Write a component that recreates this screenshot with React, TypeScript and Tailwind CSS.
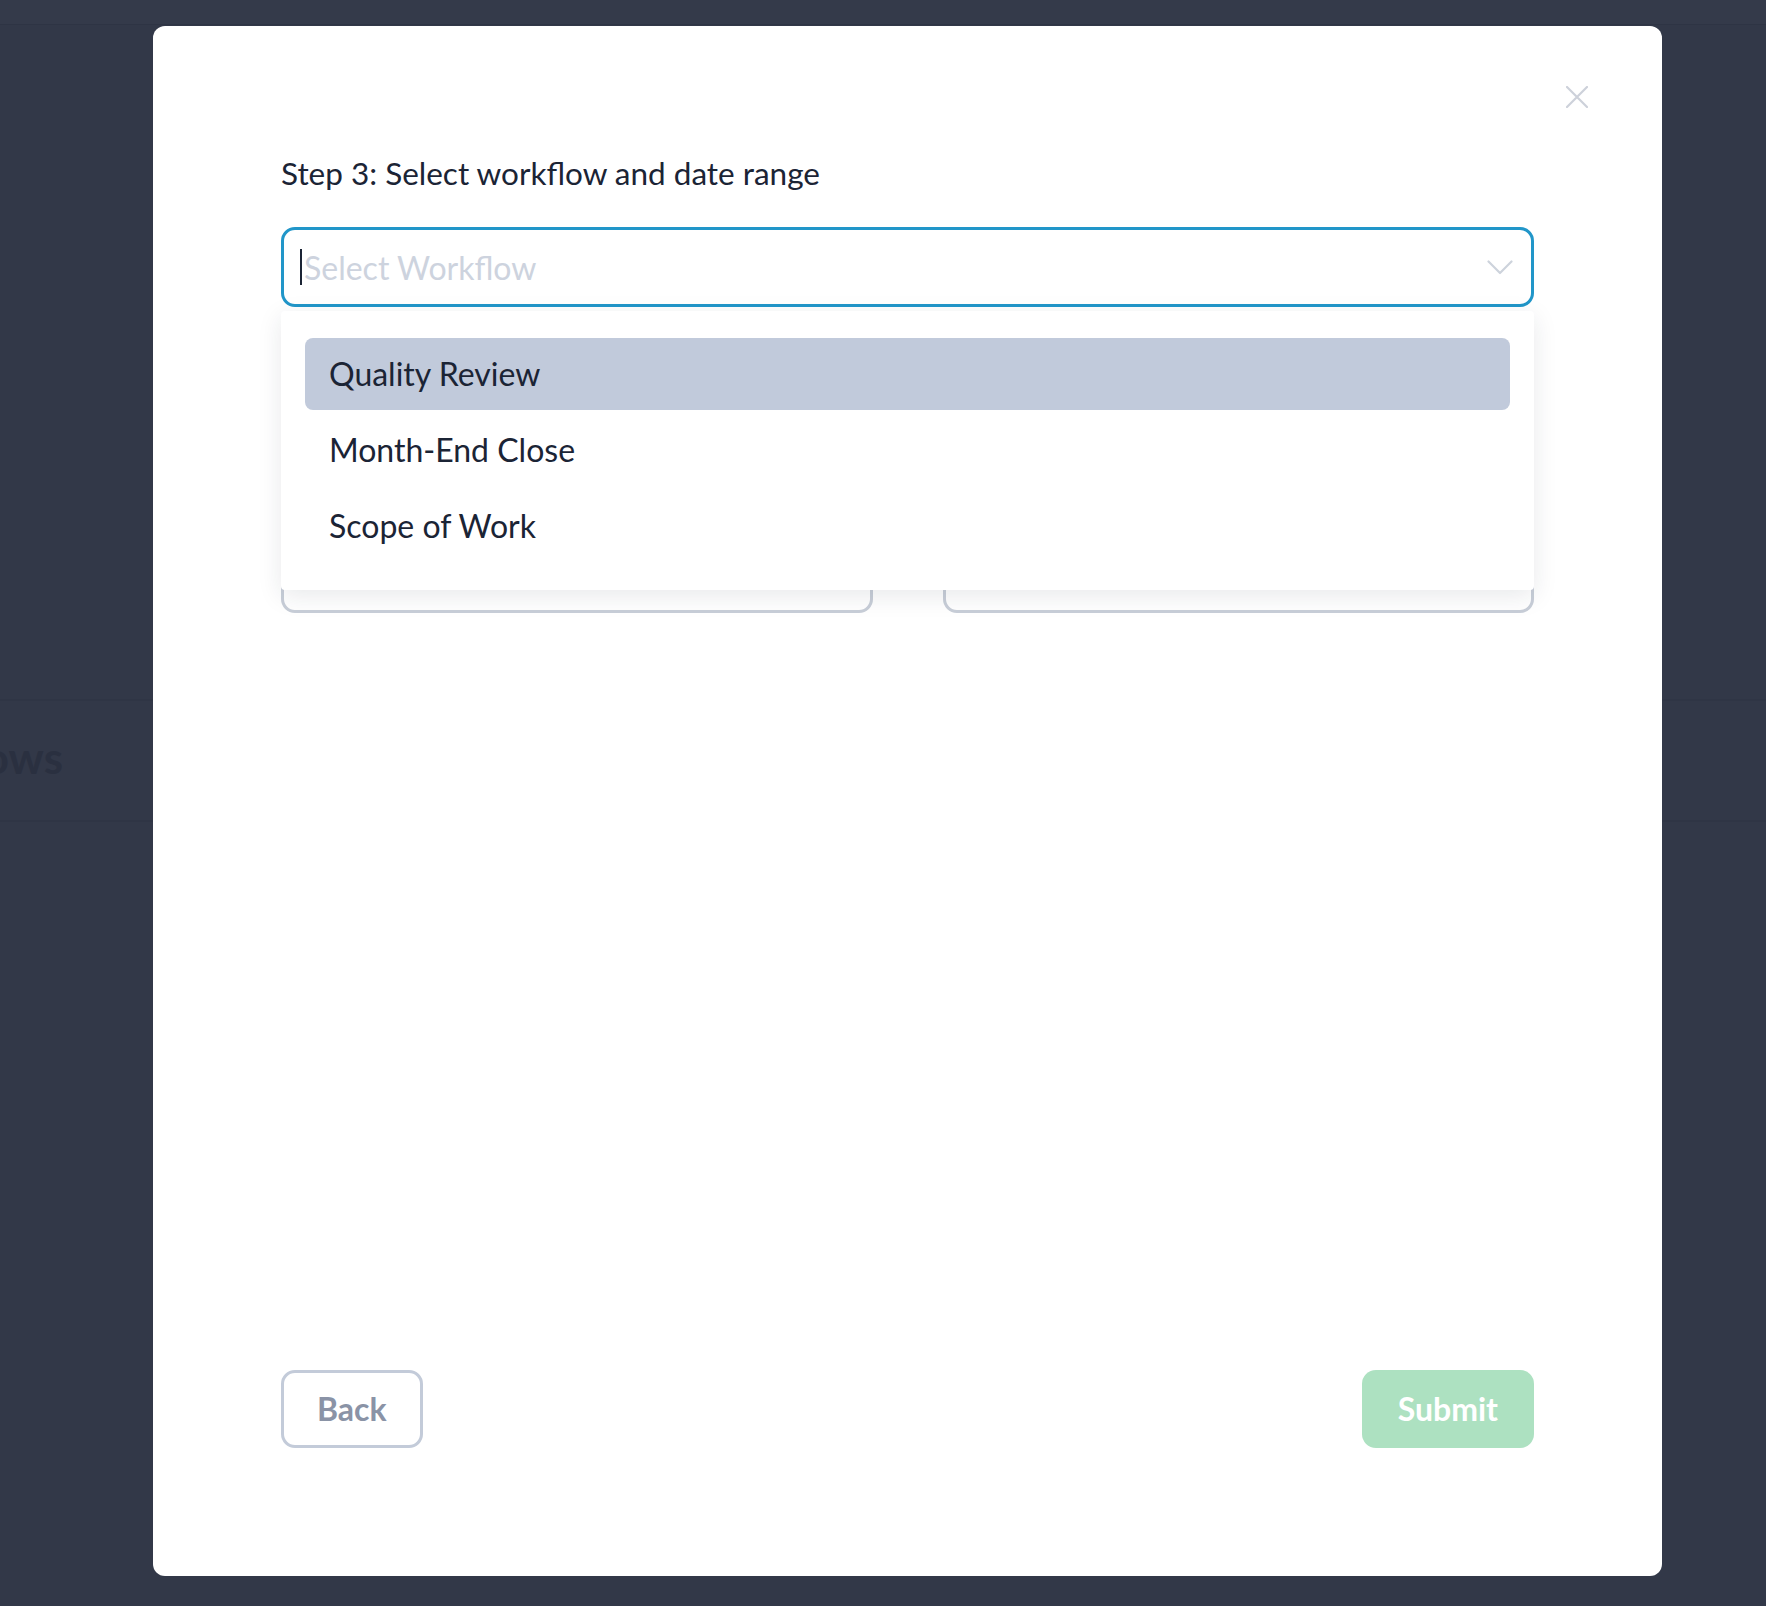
import React from "react";

const font = { fontFamily: "Lato, 'Noto Sans', sans-serif" };

export default function App() {
  return (
    <div className="relative h-[1606px] w-[1766px] overflow-hidden bg-[#323848]" style={font}>
      {/* background page */}
      <div className="flex h-full flex-col">
        <div className="h-[25px] border-b border-[#2e3444] bg-[#343a4a]" />
        <div className="mt-[674px] flex h-[123px] items-center border-y-2 border-[#2f3545]">
          <div className="mb-[7px] flex w-[63px] justify-end overflow-hidden">
            <span className="whitespace-nowrap text-[44px] font-bold leading-none text-[#2a3040]">Workflows</span>
          </div>
        </div>
      </div>

      {/* overlay with modal */}
      <div className="absolute inset-0 flex items-start">
        <div className="relative ml-[153px] mt-[26px] flex h-[1550px] w-[1509px] flex-col rounded-[12px] bg-white p-[128px]">
          <button className="absolute right-[74px] top-[60px] flex h-[22px] w-[22px] items-center justify-center">
            <svg width="22" height="22" viewBox="0 0 22 22" fill="none" stroke="#cdd1da" strokeWidth="2.2" strokeLinecap="round">
              <path d="M1 1L21 21M21 1L1 21" />
            </svg>
          </button>

          <h2 className="text-[31.5px] font-normal leading-[38px] text-[#1b2435]">
            Step 3: Select workflow and date range
          </h2>

          <div className="relative mt-[35px]">
            <div className="flex h-[80px] items-center rounded-[14px] border-[3px] border-[#2196c9] pl-[16px] pr-[18px]">
              <span className="h-[36px] w-[2px] bg-[#1b2435]" />
              <span className="ml-[2px] mt-[2px] flex-1 text-[32px] leading-none text-[#cdd3de]">Select Workflow</span>
              <svg width="26" height="15" viewBox="0 0 26 15" fill="none" stroke="#cdd3dc" strokeWidth="2.2" strokeLinecap="round" strokeLinejoin="round">
                <path d="M1.5 1.5L13 13L24.5 1.5" />
              </svg>
            </div>

            <div className="absolute left-0 right-0 top-[84px] z-10 flex flex-col gap-[4px] rounded-[4px] bg-white px-[24px] pb-[28px] pt-[27px] shadow-[0_6px_24px_rgba(30,40,60,0.10)]">
              <div className="flex h-[72px] items-center rounded-[8px] bg-[#c1cadb] px-[24px] text-[32px] text-[#1b2435]">
                Quality Review
              </div>
              <div className="flex h-[72px] items-center rounded-[8px] px-[24px] text-[32px] text-[#1b2435]">
                Month-End Close
              </div>
              <div className="flex h-[72px] items-center rounded-[8px] px-[24px] text-[32px] text-[#1b2435]">
                Scope of Work
              </div>
            </div>
          </div>

          <div className="mt-[226px] grid grid-cols-2 gap-[70px]">
            <div className="h-[80px] rounded-[14px] border-[3px] border-[#c8ced8]" />
            <div className="h-[80px] rounded-[14px] border-[3px] border-[#c8ced8]" />
          </div>

          <div className="mt-auto flex items-center justify-between">
            <button className="flex h-[78px] items-center rounded-[14px] border-[3px] border-[#c3cbd9] px-[33px] text-[32px] font-bold text-[#8a93a6]">
              Back
            </button>
            <button className="flex h-[78px] items-center rounded-[14px] bg-[#ade1c1] px-[36px] text-[32px] font-bold text-white">
              Submit
            </button>
          </div>
        </div>
      </div>
    </div>
  );
}
